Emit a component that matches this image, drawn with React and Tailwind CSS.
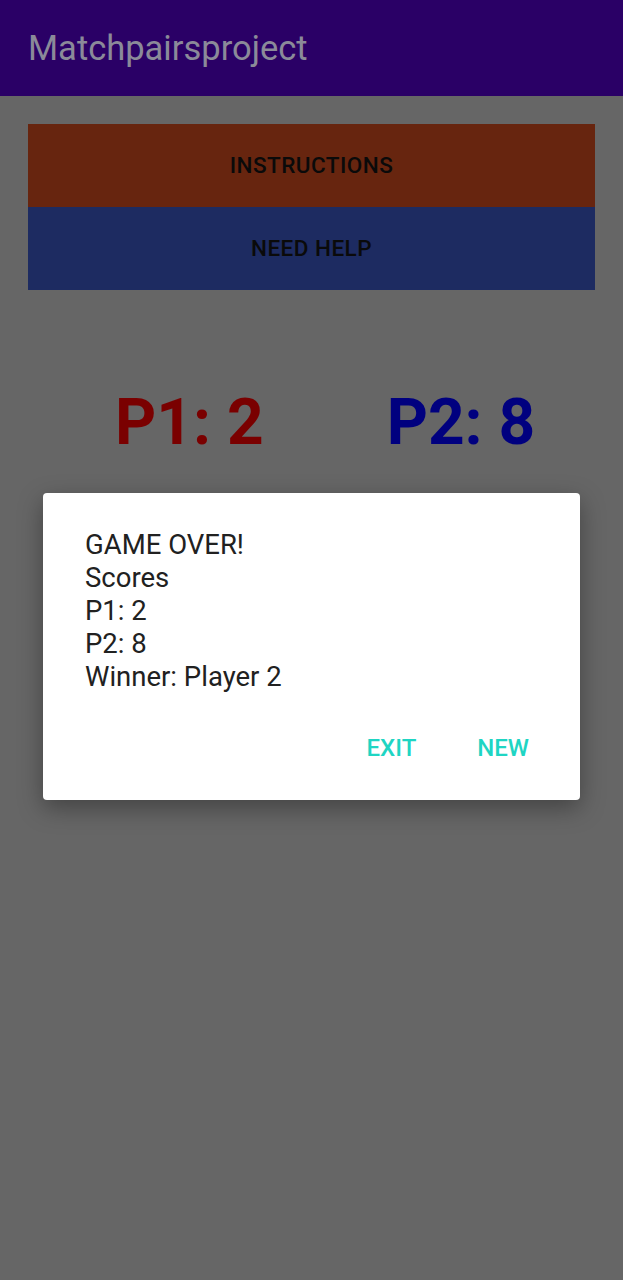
export default function App() {
  return (
    <div className="relative min-h-[1280px] bg-[#666666] font-['Roboto',sans-serif]">
      {/* Toolbar */}
      <header className="h-[96px] bg-[#2a0066] flex items-center px-[28px]">
        <h1 className="text-[34.5px] font-normal text-[#8b8a99] leading-none">Matchpairsproject</h1>
      </header>

      {/* Buttons */}
      <div className="px-[28px] pt-[28px] flex flex-col">
        <button className="h-[83px] bg-[#67250f] text-[#0a0a0a] text-[22.5px] font-medium tracking-[0.02em]">
          INSTRUCTIONS
        </button>
        <button className="h-[83px] bg-[#1d2b61] text-[#0a0a0a] text-[22.5px] font-medium tracking-[0.02em]">
          NEED HELP
        </button>
      </div>

      {/* Scores */}
      <div className="flex pl-[115px] gap-[123px] mt-[101px] text-[64px] font-bold leading-none">
        <span className="text-[#7a0000]">P1: 2</span>
        <span className="text-[#00007f]">P2: 8</span>
      </div>

      {/* Dialog */}
      <div className="absolute left-[43px] top-[493px] w-[537px] h-[307px] bg-white rounded-[4px] shadow-[0_8px_24px_rgba(0,0,0,0.35)] flex flex-col">
        <div className="pl-[42px] pt-[35px] text-[27.5px] leading-[33px] text-[#212121]">
          <div>GAME OVER!</div>
          <div>Scores</div>
          <div>P1: 2</div>
          <div>P2: 8</div>
          <div>Winner: Player 2</div>
        </div>
        <div className="flex justify-end gap-[61px] pr-[51px] mt-[43px] text-[24px] font-medium text-[#1fd5c3] leading-none">
          <button>EXIT</button>
          <button>NEW</button>
        </div>
      </div>
    </div>
  );
}
